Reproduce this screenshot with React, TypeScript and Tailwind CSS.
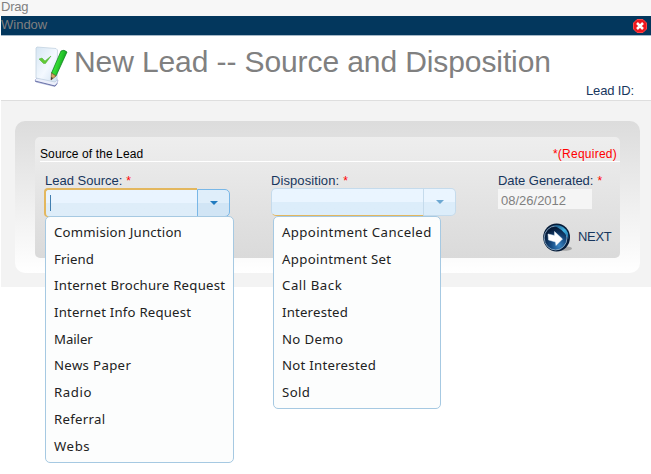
import React from 'react';

type Item = { label: string; tracking: string };

const sources: Item[] = [
  { label: 'Commision Junction', tracking: 'tracking-[0.21px]' },
  { label: 'Friend', tracking: 'tracking-[0.1px]' },
  { label: 'Internet Brochure Request', tracking: 'tracking-[0.26px]' },
  { label: 'Internet Info Request', tracking: 'tracking-[0.2px]' },
  { label: 'Mailer', tracking: 'tracking-[-0.05px]' },
  { label: 'News Paper', tracking: 'tracking-[0.35px]' },
  { label: 'Radio', tracking: 'tracking-[0.6px]' },
  { label: 'Referral', tracking: 'tracking-[0.3px]' },
  { label: 'Webs', tracking: 'tracking-[0.6px]' },
];

const dispositions: Item[] = [
  { label: 'Appointment Canceled', tracking: 'tracking-[0.4px]' },
  { label: 'Appointment Set', tracking: 'tracking-[0.33px]' },
  { label: 'Call Back', tracking: 'tracking-[0.55px]' },
  { label: 'Interested', tracking: 'tracking-[0.2px]' },
  { label: 'No Demo', tracking: 'tracking-[0.35px]' },
  { label: 'Not Interested', tracking: 'tracking-[0.27px]' },
  { label: 'Sold', tracking: 'tracking-[0.4px]' },
];

function Menu({ items, className }: { items: Item[]; className: string }) {
  return (
    <ul
      className={`absolute z-10 rounded-[5px] border border-[#a6c9e2] bg-[#fcfdfd] pt-[2px] font-['Noto_Sans',sans-serif] text-[13.2px] text-[#222222] ${className}`}
    >
      {items.map((item) => (
        <li key={item.label} className={`h-[26.7px] pl-[8px] leading-[26.7px] whitespace-nowrap ${item.tracking}`}>
          {item.label}
        </li>
      ))}
    </ul>
  );
}

function ChecklistIcon() {
  return (
    <svg width="36" height="43" viewBox="0 0 36 43">
      <defs>
        <linearGradient id="paper" x1="0" y1="0" x2="1" y2="1">
          <stop offset="0" stopColor="#d6e6f3" />
          <stop offset=".55" stopColor="#f4f9ff" />
          <stop offset="1" stopColor="#cfe1f2" />
        </linearGradient>
        <linearGradient id="pencil" x1="0" y1="0" x2="1" y2=".5">
          <stop offset="0" stopColor="#087719" />
          <stop offset=".45" stopColor="#36df36" />
          <stop offset="1" stopColor="#079315" />
        </linearGradient>
      </defs>
      <path d="M3 33 1 35 2 37 21 41.500 23 39 24 35Z" fill="#eceffb" stroke="#a3abd4" strokeWidth=".7" />
      <path d="M1 36 21 41 23 38.500" fill="none" stroke="#5d669f" strokeWidth=".9" />
      <path d="M2 3 3 2 22 3.500 23.500 5 23 35 21 37 2 33Z" fill="url(#paper)" stroke="#bccddd" strokeWidth=".7" />
      <path d="M5 14 8 13 11 16 17 11 11.500 18.500 9.500 18.500Z" fill="#62cb35" stroke="#46ad30" strokeWidth=".5" />
      <path d="M27 6 Q30 4 33 7 L22 31 17.500 28Z" fill="url(#pencil)" stroke="#07791a" strokeWidth=".7" />
      <path d="M17.500 28 22 31 17 35Z" fill="#d3aa64" stroke="#7d572b" strokeWidth=".7" />
      <path d="M17.300 32 19 33 17 35Z" fill="#292d35" />
    </svg>
  );
}

function NextIcon() {
  return (
    <svg width="31" height="31" viewBox="0 0 31 31">
      <defs>
        <radialGradient id="ball" cx=".65" cy=".82" r=".75">
          <stop offset="0" stopColor="#3a86c4" />
          <stop offset=".45" stopColor="#174d84" />
          <stop offset="1" stopColor="#061b39" />
        </radialGradient>
        <linearGradient id="shine" x1="0" y1="0" x2="1" y2="1">
          <stop offset="0" stopColor="#174572" />
          <stop offset=".55" stopColor="#3fb0e0" />
          <stop offset="1" stopColor="#1b6aa0" />
        </linearGradient>
      </defs>
      <ellipse cx="20" cy="25.500" rx="9" ry="2.300" fill="#8a8a8a" opacity=".65" />
      <ellipse cx="13.600" cy="14.500" rx="13.400" ry="14" fill="#051b38" />
      <ellipse cx="12.600" cy="15" rx="11.400" ry="12" fill="url(#ball)" stroke="#9dbdd6" strokeWidth=".8" />
      <path d="M9 2.500Q20 0 25 10L25.500 16Q20 5 9 2.500Z" fill="url(#shine)" />
      <path d="M5 11 11.500 12.500 11.500 8.500 19.500 16 13 22.500 12.500 19 5.500 17Z" fill="white" stroke="#e4f1fa" strokeWidth=".5" strokeLinejoin="round" />
    </svg>
  );
}

function CloseIcon() {
  return (
    <svg width="14" height="14" viewBox="0 0 14 14">
      <path d="M4 .5h6L13.500 4v6L10 13.500H4L.5 10V4Z" fill="#ee171e" stroke="#ff4545" />
      <path d="m4 4 6 6m0-6-6 6" stroke="white" strokeWidth="2.500" />
    </svg>
  );
}

function Required() {
  return <span className="ml-[4px] text-[12px] text-[#ff0000]">*</span>;
}

function Caret({ color }: { color: string }) {
  return (
    <svg width="8" height="4" viewBox="0 0 8 4">
      <path d="M0 0h8L4 4Z" fill={color} />
    </svg>
  );
}

export default function App() {
  return (
    <div className="h-[474px] w-[651px] overflow-hidden bg-white font-['Liberation_Sans',Arial,sans-serif] text-[13px] text-[#17365d]">
      <div className="h-4 bg-[#f7f7f7] pl-px text-[13px] leading-[14px] tracking-[-0.2px] text-[#808080]">Drag</div>
      <div className="ml-px flex h-5 items-start justify-between border-b border-[#a5b8c8] bg-[#03375d] pr-[4px]">
        <span className="text-[13px] leading-[17px] text-[#808080]">Window</span>
        <span className="pt-[3px]"><CloseIcon /></span>
      </div>
      <header className="ml-px flex h-[65px] border-b border-[#dedede] bg-white">
        <div className="ml-[33px] mt-[9px] w-9"><ChecklistIcon /></div>
        <h1 className="ml-[4px] mt-[8px] h-9 w-[480px] text-[30px] leading-9 tracking-[-0.1px] whitespace-nowrap text-[#808080]">New Lead -- Source and Disposition</h1>
        <span className="ml-[32px] mt-[47px] text-[13px] leading-4 tracking-[-0.15px] whitespace-nowrap">Lead ID:</span>
      </header>
      <main className="ml-px h-[186px] bg-[#f3f3f3] pl-[14px] pt-5">
        <section className="h-[152px] w-[625px] rounded-[10px] bg-linear-to-b from-[#dcdcdc] to-white px-5 pt-4">
          <div className="h-[121px] rounded-[5px] bg-linear-to-b from-[#eeeeee] to-[#dadada]">
            <div className="ml-[5px] flex h-[25px] w-[580px] items-start justify-between border-b border-white pt-[10px] pr-[3px] text-[12px] leading-[15px]">
              <span className="tracking-[0.1px] text-black">Source of the Lead</span>
              <span className="tracking-[0.25px] text-[#ff0000]">*(Required)</span>
            </div>
            <div className="flex pl-[9px] pt-[11px]">
              <div className="relative w-[227px]">
                <div className="h-[15px] pl-px text-[13px] leading-[15px]">Lead Source:<Required /></div>
                <div className="flex h-[29px] w-[186px] items-stretch">
                  <div className="w-[153px] rounded-l-[4px] border-2 border-r-0 border-b border-[#e3b75e] bg-linear-to-b from-[#e9f4ff] from-50% to-[#deedf9] to-50% pl-[4px] pt-[5px]">
                    <div className="h-4 w-px bg-[#427fb0]" />
                  </div>
                  <div className="mt-px flex w-[33px] items-center justify-center rounded-r-[5px] border border-[#79b7e7] bg-linear-to-b from-[#dfeefa] from-50% to-[#d1e5f5] to-50%"><Caret color="#217bc0" /></div>
                </div>
                <Menu items={sources} className="left-[1px] top-[43px] h-[247px] w-[189px]" />
              </div>
              <div className="relative w-[227px]">
                <div className="h-[15px] text-[13px] leading-[15px] tracking-[0.08px]">Disposition:<Required /></div>
                <div className="flex h-[28px] w-[185px]">
                  <div className="w-[153px] rounded-l-[5px] border border-[#c5dbec] border-b-[#e3b75e] bg-linear-to-b from-[#eaf5ff] from-50% to-[#dcedfa] to-50%" />
                  <div className="flex w-8 items-center justify-center rounded-r-[5px] border border-l-0 border-[#c5dbec] bg-linear-to-b from-[#eaf5ff] from-50% to-[#dcedfa] to-50%"><Caret color="#6da8d2" /></div>
                </div>
                <Menu items={dispositions} className="left-[2px] top-[43px] h-[193px] w-[168px]" />
              </div>
              <div className="w-[120px]">
                <div className="h-[15px] text-[13px] leading-[15px] tracking-[-0.05px] whitespace-nowrap">Date Generated:<Required /></div>
                <div className="mt-px h-5 w-[94px] bg-[#f5f5f5] pl-[3px] pt-[3px] text-[13px] leading-[17px] text-[#808080]">08/26/2012</div>
                <div className="ml-[45px] mt-[14px] flex items-start">
                  <NextIcon /><span className="ml-[4px] mt-[6px] text-[13px] leading-[15px] tracking-[-0.3px]">NEXT</span>
                </div>
              </div>
            </div>
          </div>
        </section>
      </main>
    </div>
  );
}
